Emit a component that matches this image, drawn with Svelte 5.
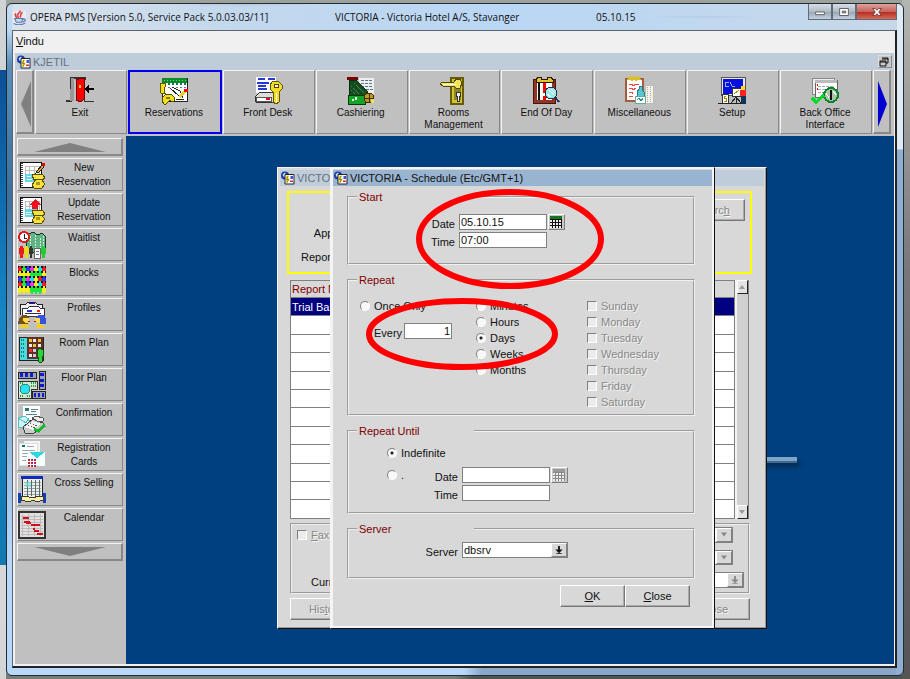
<script>
  // pixel icons, all on a 28 x 28 grid
  const icons = {
    exit: `<path d="M0 24h5V1h14v2" fill="none" stroke="#333" stroke-width="2"/><path d="M5 1h3v23H4z" fill="#999"/><path d="M18 3v21h10" fill="none" stroke="#333"/><path d="M10 3l6-2h2v21l-3 3-5-2z" fill="#f00" stroke="#700"/><path d="M13 8h2v3h-2z" fill="#fd0"/><path d="M18 12l5-4v3h5v2h-5v3z" fill="#000"/>`,
    reservations: `<path d="M2 1h25v23H2z" fill="#fff" stroke="#222"/><path d="M2 1h25v5H2z" fill="#0a8a28"/><path d="M4 3h22" stroke="#5d6" stroke-dasharray="1 2"/><path d="M4 7h22" stroke="#175" stroke-dasharray="2 2" stroke-width="2"/><path d="M8 10h18" stroke="#777" stroke-dasharray="2 2"/><path d="M10 11l9 8M12 10l8 4 3 7M16 22h8" stroke="#222" fill="none"/><path d="M18 19l6-5 2 2-6 5z" fill="#ec2"/><path d="M24 12h4v3h-4z" fill="#f00"/><path d="M1 6h4v4l-1 3 1 3H1l-1-3V8z" fill="#f1df19" stroke="#665900"/><path d="M2 21l4-4h5l3 3v4l-2 1-2-2-4 4H4l-2-3z" fill="#f1df19" stroke="#554a00"/><path d="M6 20h4v2H6z" fill="#8c7a10"/>`,
    frontdesk: `<path d="M2 0h20v16H2z" fill="#fff"/><path d="M4 2h7M14 2h7M3 6h12M4 9h8M4 12h9" stroke="#2639d8" stroke-width="2"/><path d="M1 20l5-5h13l3 5v5H2z" fill="#ddd" stroke="#333"/><path d="M2 20h15v4H2z" fill="#fff" stroke="#555"/><path d="M12 21h4v2h-4z" fill="#e00"/><path d="M19 4h5l4 4v4l-3 3v10l-3 2-3-2V15l-3-3V8z" fill="#f3dc25" stroke="#665500"/><path d="M20 7h4v3h-4z" fill="#fff" stroke="#554400"/><path d="M22 16v10" stroke="#fff"/>`,
    cashiering: `<path d="M12 1h15v16H12z" fill="#eee"/><path d="M14 3h11M14 6h11M14 9h11M19 12h7" stroke="#578" stroke-dasharray="3 1"/><path d="M0 0h11v3H0z" fill="#700"/><path d="M2 3h7l11 11v4H2z" fill="#154b20" stroke="#032d0c"/><path d="M7 6l11 11M4 9l8 8M4 13l4 4" stroke="#3f8a4b" stroke-dasharray="2 1"/><path d="M1 18h17v9H1z" fill="#14a428" stroke="#053c0b"/><path d="M8 20h2v3H8zM5 22h2v2H5z" fill="#dfffdf"/><circle cx="22" cy="21" r="5" fill="#bd9920" stroke="#432b00"/><path d="M22 17v8M18 21h8" stroke="#432b00"/><path d="M24 22h3v4h-3z" fill="#f3df50"/>`,
    rooms: `<path d="M11 1h12v26H11z" fill="#cfc53a" stroke="#695a00" stroke-width="2"/><path d="M14 4h7v19h-7z" fill="#8f8524"/><path d="M0 7l2-2h12l2-3h4l2 4-2 5h-4l-2-2H3z" fill="#efe65e" stroke="#574900"/><path d="M3 7h13" stroke="#fff"/><path d="M16 15h4v4h-1v5h-2v-5h-1z" fill="#eee" stroke="#333"/>`,
    endday: `<path d="M1 2h22v24H1z" fill="#8e3526" stroke="#4b140c"/><path d="M5 5h15v18H5z" fill="#fff"/><path d="M7 6v17" stroke="#111" stroke-width="2"/><path d="M11 6h3v10h-3zM11 19h3v4h-3z" fill="#f00"/><path d="M4 3l2-3h3v2h6V0h4l2 3v2H4z" fill="#e3c532" stroke="#241600"/><circle cx="19" cy="16" r="6" fill="#9ce9eb" stroke="#234"/><path d="M17 13l5 5M15 17l4 3M19 12l4 4" stroke="#fff"/><path d="M23 20l4 5" stroke="#234" stroke-width="2"/>`,
    misc: `<path d="M1 2h17v22H1z" fill="#fff" stroke="#a45c3b" stroke-width="2"/><path d="M3 3l2-3 2 3 2-3 2 3 2-3 2 3" fill="none" stroke="#d6c12a" stroke-width="2"/><path d="M4 7h3l1 2 3-2h3M4 11h3l1 2 3-2M4 15h3l1 2M4 19h4" stroke="#e44" fill="none"/><path d="M20 8h8v18h-8z" fill="#f3f3e5" stroke="#bbb"/><path d="M22 10v15M25 10v15" stroke="#aaa" stroke-dasharray="1 1"/><path d="M14 9h3v3l2 3v5h-7v-5l2-3z" fill="#57c6cd" stroke="#287f87"/><path d="M10 19h10v7H10z" fill="#fff" stroke="#6aa"/><path d="M12 23l2-2 2 3 2-3" fill="none" stroke="#297"/>`,
    setup: `<path d="M3 0h24v18H3z" fill="#e8e8e8" stroke="#555"/><path d="M5 2h20v15H5z" fill="#0710db"/><path d="M11 5H7v4h4M12 5l2 4h3" fill="none" stroke="#9af"/><path d="M4 17h6v9H4zM14 11h9v8h-9z" fill="#fff" stroke="#333"/><path d="M8 19H6v2h2v3H6M16 17l5-4" stroke="#a80" fill="none"/><path d="M13 26l5-6 5 6M18 20v6M0 26h28" stroke="#222" fill="none"/><path d="M23 9h4v4h-4z" fill="#f8d72e"/><path d="M22 13h6v6h-6z" fill="#f22"/><path d="M23 19h5v8h-5z" fill="#135"/>`,
    office: `<path d="M1 1h22v16H1z" fill="#eee" stroke="#888"/><path d="M4 3h22v17H4z" fill="#fff" stroke="#666"/><path d="M4 3h22v3H4z" fill="#bbb"/><path d="M7 9h16M7 12h12M7 15h10" stroke="#aaa" stroke-dasharray="3 1"/><path d="M6 8h1M6 12h1" stroke="#e00" stroke-width="2"/><circle cx="20" cy="18" r="7" fill="#a9c6ab" stroke="#0a8428" stroke-width="2"/><path d="M20 13v10" stroke="#111" stroke-width="2"/><path d="M15 16l3 5M22 14l3 4" stroke="#fff"/><path d="M1 21l4 4 8-7" fill="none" stroke="#0d2" stroke-width="3"/>`,
    newres: `<path d="M2 1h21v25H2z" fill="#fff" stroke="#111"/><path d="M4 2v23" stroke="#444" stroke-dasharray="1 1" stroke-width="2"/><path d="M7 5h14v14H7zM11 5v14M16 5v14M7 9h14M7 14h14" fill="none" stroke="#bbb"/><path d="M19 10l5-6 2 2-5 5-3 1z" fill="#d9a52b" stroke="#222"/><path d="M24 2h3v3h-3z" fill="#e00"/><path d="M7 13h12v8H7z" fill="#63d5e6"/><path d="M9 15h4M9 18h5" stroke="#fff"/><path d="M14 14l5-1 6 1 2 3-3 2-1-1h-5l-2 1z" fill="#f6e33c" stroke="#5a4c00"/><path d="M18 18h5l4 5-3 4h-8l-2-3z" fill="#f6e33c" stroke="#5a4c00"/><path d="M18 21h4v3h-4z" fill="#b19511"/>`,
    update: `<path d="M2 1h21v25H2z" fill="#fff" stroke="#111"/><path d="M4 2v23" stroke="#444" stroke-dasharray="1 1" stroke-width="2"/><path d="M7 5h14v14H7zM11 5v14M16 5v14M7 10h14" fill="none" stroke="#bbb"/><path d="M11 9l6-6 6 6h-3v6h-6V9z" fill="#f0131c"/><path d="M7 13h12v8H7z" fill="#63d5e6"/><path d="M8 16h6M8 18h5" stroke="#fff"/><path d="M14 15l5-1 6 1 2 3-3 2-1-1h-5l-2 1z" fill="#f6e33c" stroke="#5a4c00"/><path d="M18 19h5l4 4-3 4h-8l-2-3z" fill="#f6e33c" stroke="#5a4c00"/><path d="M18 21h4v3h-4z" fill="#b19511"/>`,
    waitlist: `<path d="M8 4l7-3 5 3 4-2 3 3v16H8z" fill="#5fb384" stroke="#163a24"/><path d="M12 5v15M17 4v16M22 7v13M25 5v14" stroke="#d5f2d5" stroke-dasharray="2 1"/><path d="M16 17h6v10h-6z" fill="#fff" stroke="#666"/><path d="M18 20h3M18 23h3" stroke="#777"/><circle cx="6" cy="6" r="5" fill="#fff" stroke="#e01a1d" stroke-width="2"/><path d="M6 3v4h3" fill="none" stroke="#222"/><path d="M2 15h3v2h1v6H5v4H2v-4H1v-6h1z" fill="#f01818"/><path d="M7 15h3v2h1v6h-1v4H7v-4H6v-6h1z" fill="#e9d929"/><path d="M12 15h2v2h1v6h-1v4h-2v-4h-1v-6h1z" fill="#333"/><path d="M24 15h2v2h2v6h-1v4h-3v-4h-1v-6h1z" fill="#20cd33"/>`,
    blocks: `<path d="M1 1h26v20H1z" fill="#111"/>` + Array.from({ length: 35 }, (_, i) => {
      const col = i % 7
      const row = Math.floor(i / 7)
      const c = ['#f01b26', '#14e5ec', '#f6ec22', '#f42fec', '#2a39fd', '#22e539'][(col * 5 + row * 2 + (col * row) % 3) % 6]
      const x = col * 4
      const y = row * 5
      return `<path d="M${x + 1} ${y}h2v2h1v4h-1v2h-2v-2h-1v-4h1z" fill="${c}"/><path d="M${x} ${y}h1v2h-1zM${x + 3} ${y}h1v2h-1z" fill="#111"/>`
    }).join(''),
    profiles: `<path d="M2 14V3h6l2-2h7l2 2h5v11" fill="#eee" stroke="#222"/><path d="M4 15V7h6l2-2h8l2 2h4v8z" fill="#fff" stroke="#333"/><path d="M7 12h16" stroke="#333"/><path d="M11 2h6v1h-6z" fill="#21d"/><path d="M9 9h5v2H9z" fill="#23d"/><path d="M19 9h3v2h-3z" fill="#e22"/><path d="M1 17l3-3h5l2 3-1 6H0z" fill="#77511c"/><path d="M5 17h6v5H7l-2-2z" fill="#f7dd4c"/><path d="M18 16l3-2h5l2 4v5h-6z" fill="#3752dc"/><path d="M17 17h5v5h-4l-1-2z" fill="#f7dd4c"/><path d="M1 27l3-4h5l2 4zM18 27l1-4h5l3 4z" fill="#efd02b"/><path d="M10 20h2M18 20h-2" stroke="#e00"/>`,
    room: `<path d="M1 1h24v23H1z" fill="#48dce2" stroke="#222"/><path d="M9 1h16v22H9z" fill="#642d26"/><path d="M3 4h4M3 8h4M3 12h4M3 16h4M3 20h4" stroke="#177" stroke-dasharray="1 1" stroke-width="2"/><path d="M11 3h3v3h-3zM20 3h3v3h-3zM15 8h3v3h-3z" fill="#e6c72e"/><path d="M15 3h3v3h-3zM11 8h3v3h-3zM20 8h3v3h-3zM11 18h3v3h-3z" fill="#eee"/><path d="M11 13h3v3h-3zM20 13h3v3h-3z" fill="#e33"/><path d="M15 13h3v3h-3zM15 18h3v3h-3z" fill="#ccd"/><path d="M20 14l2-2 3 2 1 5-2 3v4l-2 1-2-2v-4l-1-3z" fill="#2ad53c" stroke="#174b15"/>`,
    floor: `<path d="M0 1h18v6H0zM21 0h6v18h-6zM14 20h13v7H14z" fill="#9aa4ae" stroke="#222"/><path d="M2 2h3v4H2zM7 2h3v4H7zM12 2h3v4h-3zM22 2h4v3h-4zM22 8h4v3h-4zM22 13h4v3h-4zM16 22h2v4h-2zM20 22h2v4h-2zM24 22h2v4h-2z" fill="#1118da"/><path d="M0 10h19v8h-6v9H0z" fill="#d9e4d7" stroke="#333"/><circle cx="7" cy="18" r="5" fill="#28e3ea" stroke="#2a8a8a"/><path d="M13 12h5M13 15h5M2 25h3M9 25h3M2 12h3" stroke="#1ba336" stroke-dasharray="1 1" stroke-width="2"/>`,
    confirm: `<path d="M5 0h17v16H5z" fill="#fff"/><path d="M7 2h4v3H7z" fill="#277"/><path d="M13 3h7M13 5h5M8 8h11" stroke="#588"/><path d="M0 12l7-2 8 9-6 4-9-2z" fill="#c9f7f7" stroke="#61bcc2"/><path d="M0 12l8 5 3-5" fill="none" stroke="#61bcc2"/><path d="M5 21l10-8 10 4v4l-9 6H7z" fill="#ccc" stroke="#444"/><path d="M6 21l9-6 8 3-8 6z" fill="#f3f3f3"/><path d="M12 17l7 3M10 19l7 3" stroke="#555" stroke-dasharray="1 2"/><path d="M14 12l4-2 7 2v3l-4 1z" fill="#eee" stroke="#555"/><path d="M16 23l4 2 7-6" fill="none" stroke="#10b92b" stroke-width="3"/>`,
    registration: `<path d="M6 0h16v22H6z" fill="#f3f3f3"/><path d="M1 2h18v22H1z" fill="#fff" stroke="#ddd"/><path d="M4 4h3v2H4z" fill="#077"/><path d="M9 5h7M4 9h13M4 12h8M4 15h5M4 19h4" stroke="#98aab1"/><path d="M10 11h17v14H10z" fill="#f5ffff"/><path d="M11 11h16l-8 6z" fill="#2dd8df"/><path d="M10 18h8v8h-8z" fill="#fff"/><path d="M10 19h8M10 22h8M10 25h8" stroke="#e22" stroke-dasharray="2 1" stroke-width="2"/><path d="M11 18v9M14 18v9M17 18v9" stroke="#23c" stroke-dasharray="1 2"/>`,
    selling: `<path d="M4 1h20v22H4z" fill="#eee" stroke="#222"/><path d="M3 0h22v3H3z" fill="#1029b8"/><path d="M6 6h17M6 9h17M6 12h17M6 15h17M6 18h17" stroke="#8aa"/><path d="M9 4v16M13 4v16M17 4v16M21 4v16" stroke="#666"/><path d="M7 6h6v5H7z" fill="#72e1df" opacity=".6"/><path d="M0 17h3v10H0zM25 17h3v10h-3z" fill="#123db8"/><path d="M3 21l5-1 6 2 7-2 4 1v3l-6 2-4-2-4 2-8-2z" fill="#f6f0b4" stroke="#413b18"/>`,
    calendar: `<path d="M1 1h26v26H1z" fill="#e4e0e0" stroke="#333" stroke-width="2"/><path d="M3 5h22M3 8h22M3 11h22M3 14h22M3 17h22M3 20h22M3 23h22M4 3v22M10 3v22M16 3v22M22 3v22" stroke="#bbb"/><path d="M5 7h6M6 11h6M8 12h5M13 14h9M15 18h2M16 20h5M19 23h6" stroke="#d0111d" stroke-width="2"/>`,
    app: `<circle cx="9" cy="9" r="8" fill="#1e3aa2"/><path d="M4 7l5-4 2 4-4 6z" fill="#b8edf5"/><path d="M9 7h18v19H9z" fill="#fff" stroke="#223" stroke-width="2"/><path d="M11 9h6l-2 6h4l-5 9h-3z" fill="#f6dd2b"/><path d="M15 10l-3 7h4l-3 6" stroke="#222" fill="none"/><path d="M20 10h5v6h-5z" fill="#3d54da"/><path d="M19 19h6v3h-6z" fill="#e02a2a"/>`,
    java: `<path d="M2 2h24v24H2z" fill="#e9edf2"/><path d="M15 1c2 5-8 6-4 11 2 3 1 4 0 5M20 4c-7 3-1 5-5 10M7 6c-3 5 2 6 1 9" fill="none" stroke="#df3f43" stroke-width="3"/><path d="M5 16h15l-2 7H8zM20 17h4l1 3-5 3M3 25c6 4 17 3 22-1" fill="#c8d9ed" stroke="#5877a8" stroke-width="2"/>`
  }

  const toolbar = [
    ['Exit', 'exit'],
    ['Reservations', 'reservations'],
    ['Front Desk', 'frontdesk'],
    ['Cashiering', 'cashiering'],
    ['Rooms Management', 'rooms'],
    ['End Of Day', 'endday'],
    ['Miscellaneous', 'misc'],
    ['Setup', 'setup'],
    ['Back Office Interface', 'office']
  ]
  const sidebar = [
    ['New Reservation', 'newres'],
    ['Update Reservation', 'update'],
    ['Waitlist', 'waitlist'],
    ['Blocks', 'blocks'],
    ['Profiles', 'profiles'],
    ['Room Plan', 'room'],
    ['Floor Plan', 'floor'],
    ['Confirmation', 'confirm'],
    ['Registration Cards', 'registration'],
    ['Cross Selling', 'selling'],
    ['Calendar', 'calendar']
  ]
  const units = ['Minutes', 'Hours', 'Days', 'Weeks', 'Months']
  const days = ['Sunday', 'Monday', 'Tuesday', 'Wednesday', 'Thursday', 'Friday', 'Saturday']

  let active = $state('Reservations')
  let unit = $state('Days')
  let until = $state('indefinite')
  let startDate = $state('05.10.15')
  let startTime = $state('07:00')
  let every = $state('1')
</script>

{#snippet icon(name, cls)}
  <svg class={cls} viewBox="0 0 28 28" aria-hidden="true">{@html icons[name]}</svg>
{/snippet}

{#snippet calendarButton(disabled, label)}
  <button class="calendar" {disabled} aria-label={label}>
    <svg viewBox="0 0 14 14" aria-hidden="true">
      <path d="M1 1h12v3H1z" fill={disabled ? '#999' : '#16751c'} />
      <path d="M1 4h12v9H1z" fill="#eee" />
      <path d="M1 4.5h12M1 7.5h12M1 10.5h12M3.5 4v9M6.5 4v9M9.5 4v9M12.5 4v9" stroke={disabled ? '#888' : '#111'} />
    </svg>
  </button>
{/snippet}

{#snippet lovArrow()}
  <svg class="lov" viewBox="0 0 8 10" aria-hidden="true"><path d="M3 0h2v4h3L4 8 0 4h3zM1 8h6v1H1z" fill="currentColor" /></svg>
{/snippet}

<div class="window">
  <header class="titlebar">
    <span class="app-name">{@render icon('java', 'java')}OPERA PMS [Version 5.0, Service Pack 5.0.03.03/11]</span>
    <span>VICTORIA - Victoria Hotel A/S, Stavanger</span>
    <span>05.10.15</span>
    <div class="controls">
      <button aria-label="Minimize"><svg viewBox="0 0 24 16"><path d="M7 8h10v3H7z" fill="#fff" stroke="#555" /></svg></button>
      <button aria-label="Maximize"><svg viewBox="0 0 24 16"><path d="M7 4h10v8H7zM10 7h4v2h-4z" fill="#fff" fill-rule="evenodd" stroke="#555" /></svg></button>
      <button class="quit" aria-label="Exit program"><svg viewBox="0 0 24 16"><path d="M7 4h3l2 2 2-2h3l-3 4 3 4h-3l-2-2-2 2H7l3-4z" fill="#fff" stroke="#733" /></svg></button>
    </div>
  </header>

  <div class="client">
    <nav class="menu"><button><u>V</u>indu</button></nav>
    <div class="mdi">
      <div class="mdi-title">
        {@render icon('app', 'small')}<span>KJETIL</span>
        <button aria-label="Restore"><svg viewBox="0 0 10 10"><path d="M3 1h6v5H7M1 4h6v5H1zM3 2h6M1 5h6" fill="none" stroke="#111" /></svg></button>
      </div>

      <nav class="toolbar">
        <button class="scroll" aria-label="Scroll left"><svg viewBox="0 0 14 60"><path d="M14 9v46L4 32z" fill="#808080" /></svg></button>
        {#each toolbar as [name, glyph]}
          <button class={active === name ? 'tool active' : 'tool'} onclick={() => (active = name)}>
            {@render icon(glyph, 'glyph')}
            <span>{name}</span>
          </button>
        {/each}
        <button class="scroll" aria-label="Scroll right"><svg viewBox="0 0 14 60"><path d="M4 9v46L13 32z" fill="#0000d0" /></svg></button>
      </nav>

      <div class="work">
        <nav class="sidebar">
          <button class="roll" aria-label="Scroll up"><svg viewBox="0 0 72 10"><path d="M0 10L36 1l36 9z" fill="#808080" /></svg></button>
          {#each sidebar as [name, glyph]}
            <button class="side">
              {@render icon(glyph, 'glyph')}
              <span>{name}</span>
            </button>
          {/each}
          <button class="roll" aria-label="Scroll down"><svg viewBox="0 0 72 10"><path d="M0 0h72L36 9z" fill="#808080" /></svg></button>
        </nav>

        <main class="desktop">
          <div class="smudge"></div>

          <!-- report list, partly under the schedule window -->
          <section class="dialog reports">
            <h2>{@render icon('app', 'small')}VICTORIA</h2>
            <div class="criteria">
              <div class="criteria-labels"><span>Application</span><span>Report Group</span></div>
              <button class="btn" disabled>Searc<u>h</u></button>
            </div>
            <div class="list">
              <table>
                <thead><tr><th>Report Name</th></tr></thead>
                <tbody>
                  <tr class="selected"><td>Trial Balance</td></tr>
                  {#each Array(11) as _}
                    <tr><td></td></tr>
                  {/each}
                </tbody>
              </table>
              <div class="scrollbar">
                <button aria-label="Row up"><svg viewBox="0 0 8 8"><path d="M1 6l3-4 3 4z" fill="#999" /></svg></button>
                <button aria-label="Row down"><svg viewBox="0 0 8 8"><path d="M1 2h6L4 6z" fill="#999" /></svg></button>
              </div>
            </div>
            <div class="output">
              <div class="output-left">
                <label class="option off"><input type="checkbox" disabled /><span><u>F</u>ax</span></label>
                <span>Currency</span>
              </div>
              <div class="output-right">
                <span class="combo sunken"><select disabled aria-label="Printer"><option></option></select><i><svg viewBox="0 0 8 8"><path d="M1 2h6L4 6z" fill="#888" /></svg></i></span>
                <span class="combo sunken"><select disabled aria-label="Format"><option></option></select><i><svg viewBox="0 0 8 8"><path d="M1 2h6L4 6z" fill="#888" /></svg></i></span>
                <span class="combo wide off"><select disabled aria-label="Currency"><option></option></select><i>{@render lovArrow()}</i></span>
              </div>
            </div>
            <div class="report-buttons">
              <button class="btn" disabled>His<u>t</u>ory</button>
              <button class="btn" disabled>Close</button>
            </div>
          </section>

          <section class="dialog schedule">
            <h2>{@render icon('app', 'small')}VICTORIA - Schedule (Etc/GMT+1)</h2>
            <div class="form">
              <fieldset class="start">
                <legend>Start</legend>
                <div class="fields">
                  <label for="start-date">Date</label>
                  <input id="start-date" type="text" bind:value={startDate} />
                  {@render calendarButton(false, 'Pick start date')}
                  <label for="start-time">Time</label>
                  <input id="start-time" type="text" bind:value={startTime} />
                </div>
              </fieldset>

              <fieldset class="repeat">
                <legend>Repeat</legend>
                <div class="columns">
                  <div class="frequency">
                    <label class="option"><input type="radio" name="unit" value="Once" bind:group={unit} /><span>Once Only</span></label>
                    <div class="every">
                      <label for="every">Every</label>
                      <input id="every" type="text" bind:value={every} />
                    </div>
                  </div>
                  <div>
                    {#each units as u}
                      <label class="option"><input type="radio" name="unit" value={u} bind:group={unit} /><span>{u}</span></label>
                    {/each}
                  </div>
                  <div>
                    {#each days as d}
                      <label class="option off"><input type="checkbox" disabled /><span>{d}</span></label>
                    {/each}
                  </div>
                </div>
              </fieldset>

              <fieldset class="until">
                <legend>Repeat Until</legend>
                <label class="option"><input type="radio" name="until" value="indefinite" bind:group={until} /><span>Indefinite</span></label>
                <div class="until-row">
                  <label class="option"><input type="radio" name="until" value="date" bind:group={until} /><span>.</span></label>
                  <div class="fields">
                    <label for="until-date">Date</label>
                    <input id="until-date" type="text" />
                    {@render calendarButton(true, 'Pick end date')}
                    <label for="until-time">Time</label>
                    <input id="until-time" type="text" />
                  </div>
                </div>
              </fieldset>

              <fieldset class="server">
                <legend>Server</legend>
                <div class="fields">
                  <label for="server">Server</label>
                  <span class="combo"><select id="server"><option>dbsrv</option></select><i>{@render lovArrow()}</i></span>
                </div>
              </fieldset>

              <div class="buttons">
                <button class="btn"><u>O</u>K</button>
                <button class="btn"><u>C</u>lose</button>
              </div>
            </div>

            <svg class="marks" viewBox="0 0 383 460" aria-hidden="true">
              <ellipse cx="179" cy="71" rx="91" ry="47" />
              <ellipse cx="131" cy="166" rx="93" ry="33" />
            </svg>
          </section>
        </main>
      </div>
    </div>
  </div>
</div>

<style>
  :global(body) {
    background:
      linear-gradient(#d0d3d3, #d0d3d3) left top / 6px 70px no-repeat,
      linear-gradient(#0c4f95, #1686c4 50%, #1378b0) left 70px / 6px 495px no-repeat,
      linear-gradient(#d8d8d8, #c8c8c8) left 565px / 6px 100% no-repeat,
      linear-gradient(#b3b6b3, #777 40%, #555) right top / 8px 100% no-repeat,
      linear-gradient(to right, #777b79 50%, #4e5453 52%) left bottom / 100% 6px no-repeat,
      #9da19c;
  }
  * {
    box-sizing: border-box;
  }
  button,
  input,
  select {
    font: inherit;
    color: inherit;
    margin: 0;
    padding: 0;
    border-radius: 0;
  }
  .window {
    display: flex;
    flex-direction: column;
    min-height: calc(100vh - 6px);
    margin: 3px 6px;
    padding: 0 6px 7px 5px;
    border: 1px solid #222c36;
    border-radius: 6px;
    background:
      linear-gradient(#dfeaf5, #dfeaf5 145px, #8faed1 146px) right top / 7px 100% no-repeat,
      linear-gradient(to right, #b8d8fa 51%, #89a7ca 53%) left bottom / 100% 8px no-repeat,
      linear-gradient(#c8dbed, #b9d7f4 27px, #5c8fbb 60px, #39709f 190px, #b8d8fa 550px);
    font-family: "Liberation Sans", Arial, sans-serif;
    font-size: 11px;
    line-height: 12px;
    color: #111;
  }

  /* outer title bar */
  .titlebar {
    display: grid;
    grid-template-columns: 323fr 261fr 212fr 89px;
    height: 26px;
    align-items: center;
    background:
      radial-gradient(ellipse at 26% 0, #9babb855, transparent 8%),
      radial-gradient(ellipse at 78% 50%, #769fc644, transparent 6%),
      linear-gradient(to right, #dae2eb, #c3d8ed 25%, #bad7f5 55%, #c6d8e8);
    font-family: "Open Sans", sans-serif;
    font-size: 10px;
    white-space: nowrap;
    border-radius: 5px 5px 0 0;
  }
  .app-name {
    display: flex;
    align-items: center;
    gap: 3px;
  }
  .java {
    width: 15px;
    height: 15px;
  }
  .controls {
    display: grid;
    grid-template-columns: 24px 24px 41px;
    align-self: start;
  }
  .controls button {
    height: 16px;
    border: 1px solid #606b77;
    border-top: 0;
    background: linear-gradient(#d6dfe8, #aebac6 50%, #94a4b4 51%, #c4d1dd);
  }
  .controls .quit {
    background: linear-gradient(#dda29a, #c5665f 50%, #b5271d 51%, #d56b5a);
  }
  .controls svg {
    display: block;
    width: 22px;
    height: 14px;
    margin: auto;
  }

  .client {
    flex: 1;
    display: flex;
    flex-direction: column;
    border: 1px solid #5b6670;
    border-right: 2px solid #222;
    border-bottom: 2px solid #222;
    background: #f0f0f0;
  }
  .menu {
    height: 22px;
    padding: 4px 3px;
  }
  .menu button {
    border: 0;
    background: none;
    display: block;
  }
  .mdi {
    flex: 1;
    display: flex;
    flex-direction: column;
    margin: 0 1px 2px 2px;
    background: #c0c0c0;
  }
  .mdi-title {
    display: flex;
    align-items: center;
    height: 17px;
    padding: 0 2px 0 1px;
    background: #bfcddb;
    color: #66717b;
  }
  .mdi-title span {
    flex: 1;
  }
  .mdi-title button {
    width: 14px;
    height: 13px;
    border: 1px outset #ddd;
    background: #c8c8c8;
  }
  .mdi-title button svg {
    display: block;
    width: 10px;
    height: 10px;
  }
  .small {
    width: 15px;
    height: 14px;
    margin-right: 2px;
  }

  /* module bar */
  .toolbar {
    display: flex;
    gap: 1px;
    height: 66px;
    padding: 0 3px 2px 1px;
    font-size: 10px;
  }
  .tool,
  .scroll,
  .side,
  .roll {
    background: #c0c0c0;
    border: 1px solid;
    border-color: #f4f4f4 #888 #888 #f4f4f4;
  }
  .tool {
    flex: 1 1 0;
    min-width: 0;
    display: flex;
    flex-direction: column;
    align-items: center;
    padding: 6px 10px 0 8px;
  }
  .tool.active {
    border: 2px solid #0000f0;
    padding-top: 5px;
  }
  .tool span {
    margin-top: 2px;
  }
  .glyph {
    flex: none;
    width: 28px;
    height: 28px;
    overflow: visible;
    shape-rendering: crispEdges;
  }
  .scroll {
    flex: none;
    width: 18px;
    border-right-width: 2px;
    border-bottom-width: 2px;
  }
  .scroll svg {
    display: block;
    width: 14px;
    height: 60px;
  }

  .work {
    flex: 1;
    display: flex;
  }
  .sidebar {
    width: 111px;
    flex: none;
    padding: 2px 3px 2px 2px;
    display: flex;
    flex-direction: column;
    gap: 2px;
    font-size: 10px;
    line-height: 14px;
  }
  .side {
    display: flex;
    height: 33px;
    padding: 2px 0;
  }
  .side span {
    flex: 1;
    padding: 0 6px;
  }
  .roll {
    height: 18px;
    border-right-width: 2px;
    border-bottom-width: 2px;
  }
  .roll svg {
    display: block;
    width: 72px;
    height: 10px;
    margin: auto;
  }

  .desktop {
    flex: 1;
    position: relative;
    min-height: 527px;
    background: #004080;
  }
  .smudge {
    position: absolute;
    left: 630px;
    top: 321px;
    width: 41px;
    height: 6px;
    background: #7ea4c6;
    border-bottom: 2px solid #41688f;
    box-shadow: 3px 4px 4px #062c55;
  }

  /* inner windows */
  .dialog {
    position: absolute;
    top: 31px;
    height: 462px;
    padding: 2px;
    background: #d8d8d8;
    border: 1px solid #f4f4f4;
    border-right-color: #111;
    border-bottom-color: #111;
  }
  .dialog h2 {
    display: flex;
    align-items: center;
    height: 16px;
    margin: 0;
    font-size: 11px;
    font-weight: normal;
    white-space: nowrap;
  }
  .reports {
    left: 151px;
    width: 490px;
    box-shadow: inset -1px -1px #999;
  }
  .reports h2 {
    background: #bfcddb;
    color: #66717b;
  }
  .schedule {
    left: 204px;
    width: 385px;
    box-shadow: inset 2px 1px #f4f4f4, inset -2px -2px #f4f4f4;
  }
  .schedule h2 {
    background: #99b4d1;
  }
  .btn {
    width: 65px;
    height: 22px;
    border: 1px solid;
    border-color: #fff #777 #777 #fff;
    box-shadow: inset -1px -1px #aaa;
    background: #d8d8d8;
  }
  .btn:disabled,
  .off {
    color: #888;
    text-shadow: 1px 1px #f4f4f4;
  }

  .criteria {
    display: flex;
    justify-content: space-between;
    height: 83px;
    margin: 5px 12px 0 7px;
    padding: 6px 5px 9px 12px;
    border: 2px solid #ffff00;
  }
  .criteria-labels {
    display: grid;
    gap: 12px;
    align-content: end;
    justify-items: end;
  }
  .list {
    display: flex;
    height: 239px;
    margin: 6px 15px 0 10px;
  }
  table {
    flex: 1;
    height: 239px;
    border-collapse: collapse;
  }
  th,
  td {
    height: 18px;
    padding: 0 1px;
    border: 1px solid #808080;
    text-align: left;
    background: #fff;
  }
  th {
    height: 17px;
    font-weight: normal;
    color: #800000;
    background: #d8d8d8;
  }
  .selected td {
    background: #000080;
    color: #fff;
  }
  .scrollbar {
    width: 14px;
    display: flex;
    flex-direction: column;
    justify-content: space-between;
    border-left: 2px solid #f4f4f4;
    border-right: 1px solid #808080;
    background: #d0d0d0;
  }
  .scrollbar button {
    height: 14px;
    border: 1px solid;
    border-color: #fff #222 #222 #fff;
    background: #e4e4e4;
  }
  .scrollbar svg {
    display: block;
    width: 8px;
    height: 8px;
  }
  .output {
    display: flex;
    justify-content: space-between;
    height: 71px;
    margin: 4px 14px 0 10px;
    padding: 2px 4px 4px 5px;
    border: 2px groove #eee;
  }
  .output-left {
    display: flex;
    flex-direction: column;
    justify-content: space-between;
  }
  .output-left > span {
    padding-left: 14px;
  }
  .output-right {
    display: flex;
    flex-direction: column;
    align-items: flex-start;
    gap: 7px;
  }
  .report-buttons {
    display: flex;
    justify-content: space-between;
    margin: 4px 14px 0 10px;
  }
  .report-buttons .btn {
    width: 72px;
  }

  .form {
    padding: 5px 17px 0 14px;
  }
  fieldset {
    min-width: 0;
    margin: 0 0 9px;
    padding: 0;
    border: 2px groove #f0f0f0;
  }
  legend {
    width: 117px;
    height: 12px;
    margin-left: 8px;
    padding: 0 2px;
    color: #800000;
  }
  .fields {
    display: grid;
    grid-template-columns: 106px 88px 17px;
    column-gap: 1px;
    row-gap: 2px;
    align-items: end;
  }
  .fields > label {
    grid-column: 1;
    padding-right: 3px;
    text-align: right;
  }
  .fields > input {
    grid-column: 2;
  }
  input[type='text'] {
    width: 100%;
    height: 16px;
    padding: 0 1px;
    border: 1px solid #808080;
    background: #fff;
    outline: 0;
  }
  .calendar {
    width: 17px;
    height: 16px;
    border: 1px solid;
    border-color: #fff #808080 #808080 #fff;
    background: #c8c8c8;
  }
  .calendar svg {
    display: block;
    width: 14px;
    height: 14px;
  }
  .start {
    height: 74px;
  }
  .start .fields {
    padding-top: 11px;
    grid-template-columns: 109px 88px 17px;
  }
  .repeat {
    height: 142px;
  }
  .columns {
    display: grid;
    grid-template-columns: 127px 111px 1fr;
    padding-top: 12px;
  }
  .frequency {
    padding-left: 11px;
  }
  .every {
    display: grid;
    grid-template-columns: 27px 48px;
    gap: 3px;
    align-items: end;
    padding-left: 14px;
    margin-top: 9px;
  }
  .every input {
    text-align: right;
  }
  .option {
    display: flex;
    align-items: center;
    gap: 4px;
    height: 16px;
  }
  input[type='radio'],
  input[type='checkbox'] {
    appearance: none;
    flex: none;
    width: 10px;
    height: 10px;
    border: 1px solid;
    border-color: #808080 #fff #fff #808080;
    background: #f8f8f8;
  }
  input[type='checkbox'] {
    background: #ececec;
  }
  input[type='radio'] {
    border-radius: 50%;
  }
  input[type='radio']:checked {
    background: radial-gradient(circle, #222 0 1px, #f8f8f8 2px);
  }
  .until {
    height: 89px;
  }
  .until > .option {
    margin: 8px 0 6px 38px;
  }
  .until-row {
    display: flex;
    padding-left: 38px;
  }
  .until-row > .option {
    width: 42px;
  }
  .until-row .fields {
    grid-template-columns: 32px 88px 17px;
  }
  .server {
    height: 56px;
    margin-bottom: 6px;
  }
  .server .fields {
    grid-template-columns: 112px 106px;
    padding-top: 7px;
  }
  .combo {
    display: flex;
    width: 106px;
    height: 16px;
    border: 1px solid #808080;
    background: #fff;
  }
  .combo.sunken {
    margin-right: 11px;
  }
  .combo.wide {
    width: 117px;
  }
  .combo select {
    flex: 1;
    min-width: 0;
    appearance: none;
    border: 0;
    padding: 0 1px;
    background: transparent;
    opacity: 1;
  }
  .combo i {
    display: grid;
    place-items: center;
    width: 16px;
    border: 1px solid;
    border-color: #fff #808080 #808080 #fff;
    background: #d8d8d8;
    pointer-events: none;
  }
  .combo i svg {
    width: 8px;
    height: 9px;
  }
  .buttons {
    display: flex;
    justify-content: flex-end;
    padding-right: 5px;
  }
  .marks {
    position: absolute;
    left: 0;
    top: 0;
    width: 383px;
    height: 460px;
    pointer-events: none;
  }
  .marks ellipse {
    fill: none;
    stroke: #ff0000;
    stroke-width: 6px;
  }
</style>
